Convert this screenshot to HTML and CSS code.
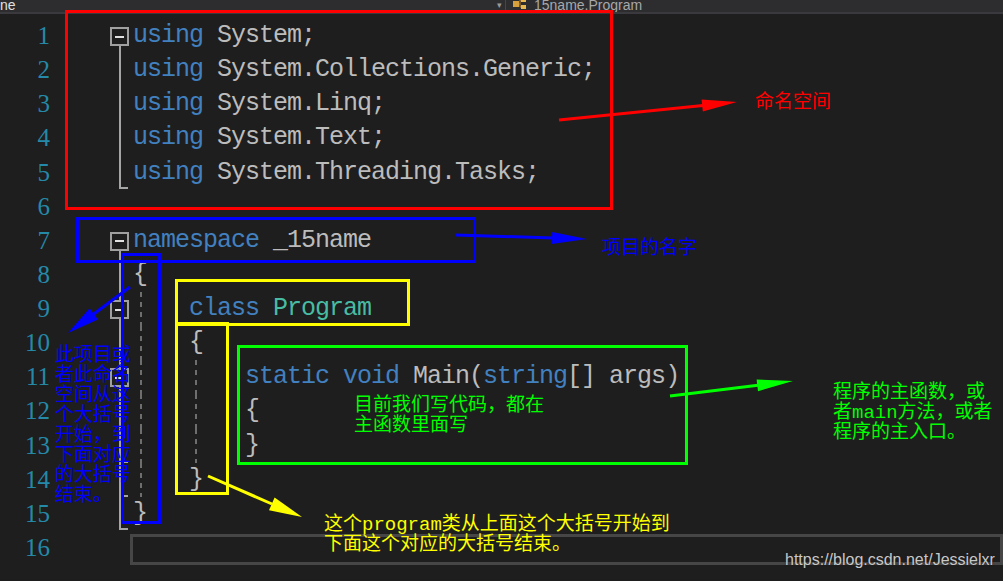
FILE: index.html
```html
<!DOCTYPE html>
<html lang="zh-CN">
<head>
    <meta charset="UTF-8">
    <meta name="viewport" content="width=device-width, initial-scale=1.0">
    <title>15name.Program</title>
    <link rel="stylesheet" href="styles.css">
</head>
<body>
    <div class="topbar">
        <div class="nav-left">ne</div>
        <div class="nav-drop">▾</div>
        <div class="nav-sep"></div>
        <div class="nav-right">
            <svg class="class-icon" width="14" height="12" viewBox="0 0 14 12">
                <rect x="0" y="3" width="6" height="6" fill="#d8a03c"/>
                <rect x="8" y="0" width="5" height="4" fill="#e8b850"/>
                <rect x="8" y="7" width="5" height="4" fill="#e8b850"/>
                <path d="M6 6 H7 V2 H8 M7 6 V9 H8" stroke="#b07a2a" fill="none"/>
            </svg>
            <span>15name.Program</span>
        </div>
    </div>

    <div class="editor">
        <div class="row"><span class="ln">1</span><span class="fold"><i class="vl below"></i><i class="box"></i></span><span class="code"><span class="kw">using</span> System;</span></div>
        <div class="row"><span class="ln">2</span><span class="fold"><i class="vl"></i></span><span class="code"><span class="kw">using</span> System.Collections.Generic;</span></div>
        <div class="row"><span class="ln">3</span><span class="fold"><i class="vl"></i></span><span class="code"><span class="kw">using</span> System.Linq;</span></div>
        <div class="row"><span class="ln">4</span><span class="fold"><i class="vl"></i></span><span class="code"><span class="kw">using</span> System.Text;</span></div>
        <div class="row"><span class="ln">5</span><span class="fold"><i class="vl end"></i><i class="hl"></i></span><span class="code"><span class="kw">using</span> System.Threading.Tasks;</span></div>
        <div class="row"><span class="ln">6</span><span class="fold"></span><span class="code"></span></div>
        <div class="row"><span class="ln">7</span><span class="fold"><i class="vl below"></i><i class="box"></i></span><span class="code"><span class="kw">namespace</span> _15name</span></div>
        <div class="row"><span class="ln">8</span><span class="fold"><i class="vl"></i></span><span class="code">{</span></div>
        <div class="row"><span class="ln">9</span><span class="fold"><i class="vl"></i><i class="box"></i></span><span class="code"><i class="guide g1"></i>    <span class="kw">class</span> <span class="ty">Program</span></span></div>
        <div class="row"><span class="ln">10</span><span class="fold"><i class="vl"></i></span><span class="code"><i class="guide g1"></i>    {</span></div>
        <div class="row"><span class="ln">11</span><span class="fold"><i class="vl"></i><i class="box"></i></span><span class="code"><i class="guide g1"></i><i class="guide g2"></i>        <span class="kw">static</span> <span class="kw">void</span> Main(<span class="kw">string</span>[] args)</span></div>
        <div class="row"><span class="ln">12</span><span class="fold"><i class="vl"></i></span><span class="code"><i class="guide g1"></i><i class="guide g2"></i>        {</span></div>
        <div class="row"><span class="ln">13</span><span class="fold"><i class="vl"></i><i class="tick"></i></span><span class="code"><i class="guide g1"></i><i class="guide g2"></i>        }</span></div>
        <div class="row"><span class="ln">14</span><span class="fold"><i class="vl"></i><i class="tick"></i></span><span class="code"><i class="guide g1"></i>    }</span></div>
        <div class="row"><span class="ln">15</span><span class="fold"><i class="vl end"></i><i class="hl"></i></span><span class="code">}</span></div>
        <div class="row"><span class="ln">16</span><span class="fold"></span><span class="code"><span class="curline"></span></span></div>
    </div>

    <!-- annotations drawn over the editor -->
    <div class="notes">
        <div class="mark red-box"></div>
        <div class="mark blue-ns"></div>
        <div class="mark blue-tall"></div>
        <div class="mark yellow-class"></div>
        <div class="mark yellow-brace"></div>
        <div class="mark green-main"></div>

        <svg class="arrows" width="1003" height="581" viewBox="0 0 1003 581">
            <line x1="559" y1="120" x2="703" y2="105.5" stroke="#ff0000" stroke-width="3"/>
            <polygon points="737,102 702.8,111.5 701.6,99.5" fill="#ff0000"/>

            <line x1="456" y1="235" x2="553" y2="238" stroke="#0000ff" stroke-width="3"/>
            <polygon points="587,239 551.8,243.9 552.2,231.9" fill="#0000ff"/>

            <line x1="130" y1="287" x2="93" y2="314.5" stroke="#0000ff" stroke-width="3"/>
            <polygon points="68,333 97.9,319.5 89.5,308.3" fill="#0000ff"/>

            <line x1="208" y1="476" x2="272" y2="504" stroke="#ffff00" stroke-width="3"/>
            <polygon points="302,517 269,510.2 274.6,497.4" fill="#ffff00"/>

            <line x1="670" y1="396" x2="758" y2="385.3" stroke="#00ff00" stroke-width="3"/>
            <polygon points="793,381 758,391.3 756.6,379.4" fill="#00ff00"/>
        </svg>

        <div class="note red-note">命名空间</div>
        <div class="note blue-note">项目的名字</div>
        <div class="note blue-col">此项目或<br>者此命名<br>空间从这<br>个大括号<br>开始，到<br>下面对应<br>的大括号<br>结束。</div>
        <div class="note green-in">目前我们写代码，都在<br>主函数里面写</div>
        <div class="note green-out">程序的主函数，或<br>者main方法，或者<br>程序的主入口。</div>
        <div class="note yellow-note">这个program类从上面这个大括号开始到<br>下面这个对应的大括号结束。</div>

        <div class="watermark">https://blog.csdn.net/Jessielxr</div>
    </div>
</body>
</html>
```

FILE: styles.css
```css
body {
    margin: 0;
    padding: 0;
    width: 1003px;
    height: 581px;
    overflow: hidden;
    position: relative;
    background-color: #1e1e1e;
    font-family: "Liberation Sans", Arial, sans-serif;
}

/* navigation bar, cut off at the top */
.topbar {
    display: flex;
    height: 12px;
    overflow: hidden;
    background-color: #2d2d30;
    border-bottom: 2px solid #3a3a3e;
    font-size: 14px;
    line-height: 12px;
}

.nav-left {
    width: 497px;
    color: #e0e0e0;
    margin-top: -1px;
}

.nav-drop {
    width: 8px;
    font-size: 9px;
    color: #9a9a9a;
    margin-top: -1px;
}

.nav-sep {
    width: 1px;
    background-color: #46464a;
}

.nav-right {
    display: flex;
    align-items: flex-start;
    padding-left: 7px;
    color: #a8a8a8;
}

.nav-right span {
    margin-left: 7px;
    margin-top: -1px;
}

.class-icon {
    margin-top: -2px;
}

/* code editor */
.editor {
    padding-top: 5px;
}

.row {
    display: flex;
    height: 34.13px;
}

.ln {
    width: 50px;
    text-align: right;
    font-family: "Liberation Serif", "Times New Roman", serif;
    font-size: 25px;
    line-height: 34.13px;
    color: #2589a8;
}

.fold {
    width: 83px;
    position: relative;
}

.fold i {
    position: absolute;
    display: block;
}

.fold .vl {
    left: 69px;
    width: 2px;
    top: 0;
    bottom: 0;
    background-color: #a5a5a5;
}

.fold .vl.below {
    top: 50%;
}

.fold .vl.end {
    bottom: 1px;
}

.fold .hl {
    left: 69px;
    width: 9px;
    height: 2px;
    bottom: 1px;
    background-color: #a5a5a5;
}

.fold .tick {
    left: 73px;
    width: 5px;
    height: 2px;
    bottom: 0;
    background-color: #a5a5a5;
}

.fold .box {
    left: 60px;
    top: 50%;
    margin-top: -9px;
    width: 19px;
    height: 19px;
    box-sizing: border-box;
    border: 2px solid #a0a0a0;
    background-color: #1e1e1e;
}

.fold .box::after {
    content: "";
    position: absolute;
    left: 3px;
    right: 3px;
    top: 6.5px;
    height: 2px;
    background-color: #e0e0e0;
}

.code {
    flex: 1;
    position: relative;
    font-family: "Liberation Mono", "Courier New", monospace;
    font-size: 25px;
    letter-spacing: -1px;
    line-height: 34.13px;
    white-space: pre;
    color: #bcbcbc;
}

.kw {
    color: #4281c0;
}

.ty {
    color: #48bca3;
}

.guide {
    position: absolute;
    top: 0;
    bottom: 0;
    width: 2px;
    background: repeating-linear-gradient(to bottom, #6e6e6e 0 5px, transparent 5px 10px);
}

.guide.g1 {
    left: 7px;
}

.guide.g2 {
    left: 62px;
}

.curline {
    display: block;
    margin-top: 3px;
    margin-left: -3px;
    height: 31px;
    box-sizing: border-box;
    border: 3px solid #464646;
}

/* annotations */
.notes {
    position: absolute;
    left: 0;
    top: 0;
    width: 1003px;
    height: 581px;
    pointer-events: none;
}

.arrows {
    position: absolute;
    left: 0;
    top: 0;
}

.mark {
    position: absolute;
    box-sizing: border-box;
    border: 3px solid;
}

.red-box {
    left: 65px;
    top: 10px;
    width: 548px;
    height: 200px;
    border-color: #ff0000;
}

.blue-ns {
    left: 76px;
    top: 217px;
    width: 400px;
    height: 46px;
    border-color: #0000ff;
}

.blue-tall {
    left: 121px;
    top: 253px;
    width: 40px;
    height: 271px;
    border-color: #0000ff;
}

.yellow-class {
    left: 175px;
    top: 279px;
    width: 235px;
    height: 47px;
    border-color: #ffff00;
}

.yellow-brace {
    left: 175px;
    top: 322px;
    width: 54px;
    height: 173px;
    border-color: #ffff00;
}

.green-main {
    left: 237px;
    top: 345px;
    width: 451px;
    height: 120px;
    border-color: #00ff00;
}

.note {
    position: absolute;
    font-family: "Liberation Mono", "Noto Sans CJK SC", monospace;
    font-size: 19px;
    line-height: 20px;
    white-space: nowrap;
}

.red-note {
    left: 755px;
    top: 93px;
    color: #ff0000;
}

.blue-note {
    left: 602px;
    top: 239px;
    color: #0000ff;
}

.blue-col {
    left: 55px;
    top: 346px;
    color: #0000ff;
}

.green-in {
    left: 354px;
    top: 396px;
    color: #00ff00;
}

.green-out {
    left: 833px;
    top: 383px;
    color: #00ff00;
}

.yellow-note {
    left: 324px;
    top: 515px;
    color: #ffff00;
}

.watermark {
    position: absolute;
    left: 785px;
    top: 551px;
    font-family: "Liberation Sans", Arial, sans-serif;
    font-size: 16px;
    line-height: 18px;
    color: #c8c8c8;
    text-shadow: 0 0 2px #1e1e1e;
}
```
